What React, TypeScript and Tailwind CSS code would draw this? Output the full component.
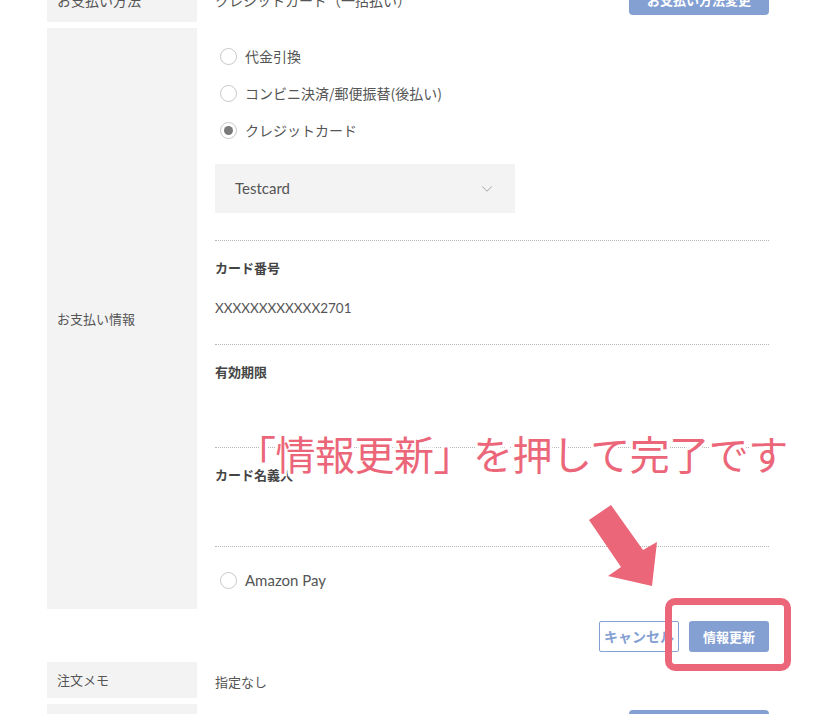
import { ChevronDown } from 'lucide-react';

const jp = "font-['Noto_Sans_CJK_JP','Noto_Sans',sans-serif]";
const latin = "font-['Lato','Noto_Sans_CJK_JP',sans-serif]";

function Radio({ label, checked, latinText }: { label: string; checked?: boolean; latinText?: boolean }) {
  return (
    <div className="flex items-center h-[37px] pl-[5px]">
      <span className="w-[17px] h-[17px] rounded-full border border-[#c8c8c8] bg-white flex items-center justify-center shrink-0">
        {checked && <span className="w-[9px] h-[9px] rounded-full bg-[#7a7a7a]" />}
      </span>
      <span className={`ml-[8px] ${latinText ? `text-[15px] ${latin}` : 'text-[14px]'} text-[#555]`}>{label}</span>
    </div>
  );
}

function Field({ label, value, height }: { label: string; value?: string; height: string }) {
  return (
    <div className={`border-t border-dotted border-[#b5b5b5] ${height}`}>
      <div className="pt-[17px] text-[13px] font-bold text-[#444] leading-[20px]">{label}</div>
      {value && (
        <div className={`mt-[20px] text-[13.5px] text-[#555] leading-[20px] ${latin}`}>{value}</div>
      )}
    </div>
  );
}

export default function App() {
  return (
    <div className={`relative w-[820px] h-[714px] overflow-hidden bg-white ${jp}`}>
      <div className="mt-[-22px] pl-[47px] pr-[51px] w-[820px]">
        {/* お支払い方法 */}
        <div className="flex h-[44px]">
          <div className="w-[150px] bg-[#f3f3f3] flex items-center pl-[10px] text-[14px] text-[#555]">お支払い方法</div>
          <div className="flex-1 flex items-center justify-between pl-[18px]">
            <span className="text-[14px] text-[#555]">クレジットカード（一括払い）</span>
            <button className="w-[140px] h-[30px] rounded-[4px] bg-[#84a0d3] text-white text-[13px] font-bold">お支払い方法変更</button>
          </div>
        </div>

        {/* お支払い情報 */}
        <div className="flex mt-[6px] h-[581px]">
          <div className="w-[150px] bg-[#f3f3f3] flex items-center pl-[10px] text-[13px] text-[#555]">お支払い情報</div>
          <div className="flex-1 pl-[18px] pt-[10px]">
            <Radio label="代金引換" />
            <Radio label="コンビニ決済/郵便振替(後払い)" />
            <Radio label="クレジットカード" checked />
            <div className="mt-[15px] w-[300px] h-[49px] bg-[#f3f3f3] flex items-center justify-between pl-[20px] pr-[19px]">
              <span className={`text-[15px] text-[#555] ${latin}`}>Testcard</span>
              <ChevronDown className="w-[18px] h-[18px] text-[#8a8a8a]" strokeWidth={1} />
            </div>
            <div className="mt-[27px]">
              <Field label="カード番号" value="XXXXXXXXXXXX2701" height="h-[104px]" />
              <Field label="有効期限" height="h-[103px]" />
              <Field label="カード名義人" height="h-[99px]" />
              <div className="border-t border-dotted border-[#b5b5b5] pt-[15px]">
                <Radio label="Amazon Pay" latinText />
              </div>
            </div>
          </div>
        </div>

        {/* buttons */}
        <div className="flex justify-end gap-[10px] mt-[12px]">
          <button className="w-[80px] h-[31px] border border-[#84a0d3] rounded-[2px] bg-white text-[#84a0d3] text-[14px] font-bold overflow-hidden whitespace-nowrap text-left pl-[4px]">キャンセル</button>
          <button className="w-[80px] h-[31px] rounded-[3px] bg-[#84a0d3] text-white text-[13px] font-bold">情報更新</button>
        </div>

        {/* 注文メモ */}
        <div className="flex mt-[10px] h-[36px]">
          <div className="w-[150px] bg-[#f3f3f3] flex items-center pl-[10px] text-[13px] text-[#555]">注文メモ</div>
          <div className="flex-1 flex items-center pl-[18px] pt-[4px] text-[13px] text-[#555]">指定なし</div>
        </div>

        <div className="flex mt-[6px] h-[44px]">
          <div className="w-[150px] bg-[#f3f3f3]" />
          <div className="flex-1 flex justify-end pt-[6px]">
            <div className="w-[140px] h-[30px] rounded-[4px] bg-[#84a0d3]" />
          </div>
        </div>
      </div>

      {/* annotation overlay */}
      <div className="absolute left-[236px] top-[425px] text-[40px] leading-[56px] tracking-[-0.5px] text-[#ec6679] whitespace-nowrap [paint-order:stroke_fill] [-webkit-text-stroke:5px_white]">
        「情報更新」を押して完了です
      </div>
      <svg className="absolute left-0 top-0" width="820" height="714" viewBox="0 0 820 714">
        <polygon points="589,520 611,505 643,550 657,542 652,586 608,576 621,567" fill="#ec6679" />
      </svg>
      <div className="absolute left-[665px] top-[598px] w-[126px] h-[73px] border-[7px] border-[#ec6679] rounded-[10px]" />
    </div>
  );
}
